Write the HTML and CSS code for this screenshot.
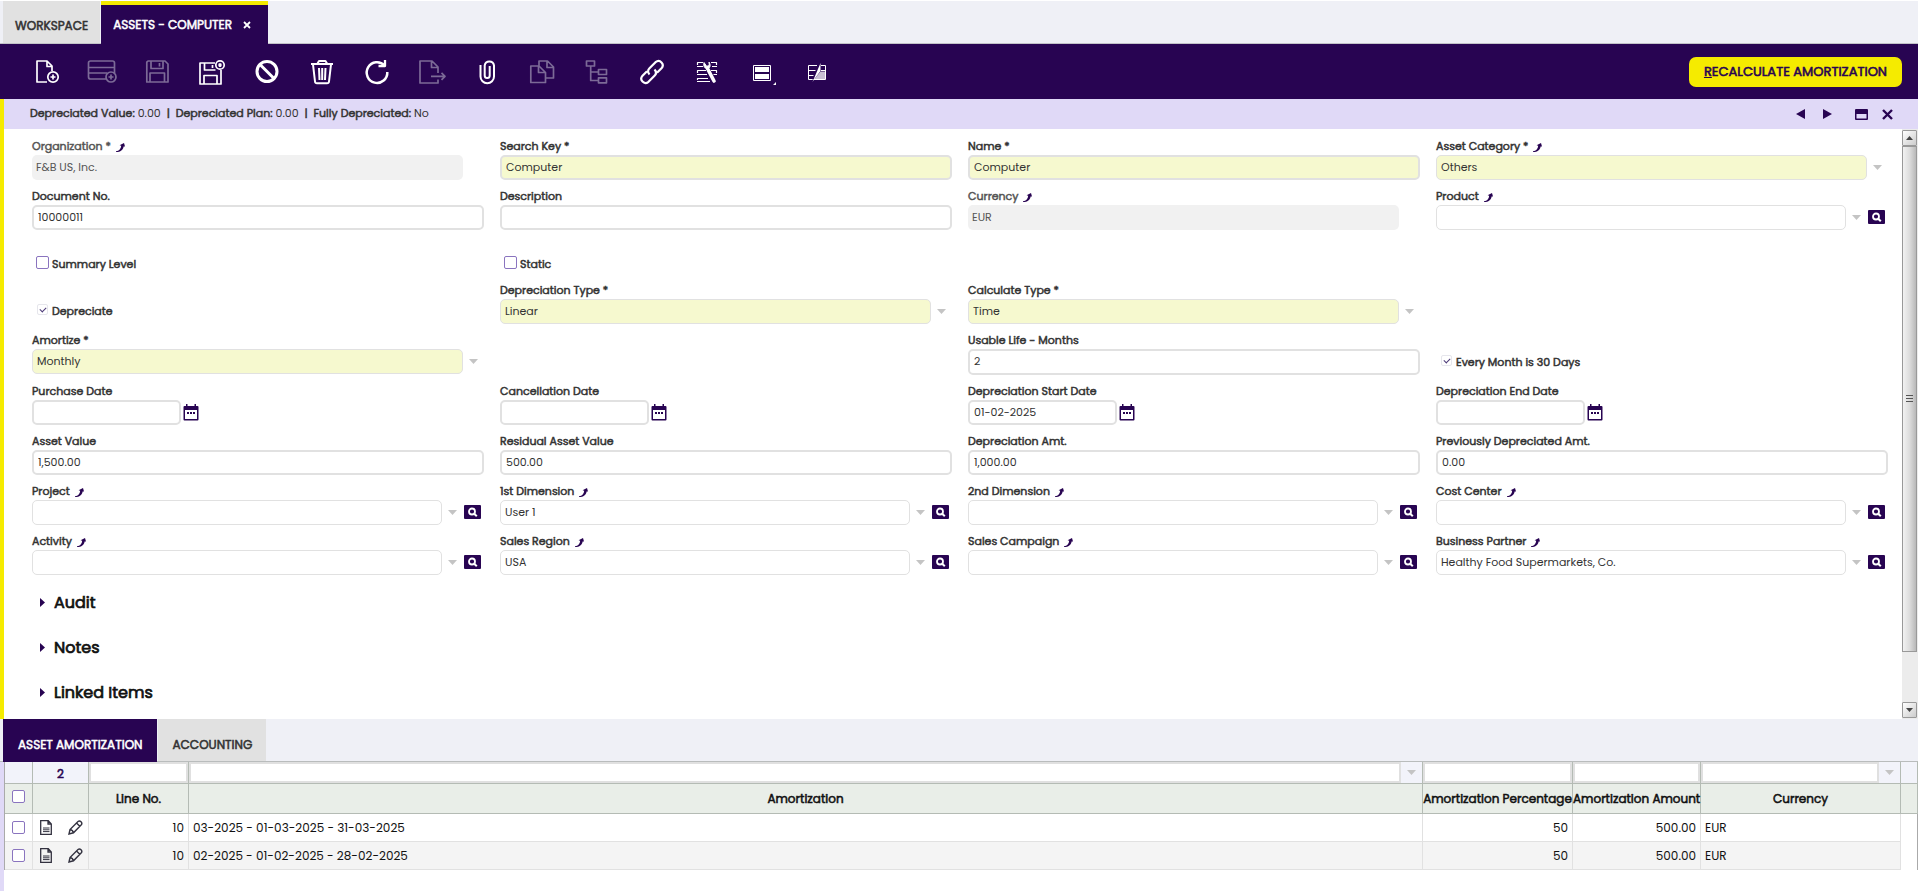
FILE: index.html
```html
<!DOCTYPE html>
<html lang="en">
<head>
<meta charset="utf-8">
<title>Assets - Computer</title>
<link rel="stylesheet" href="styles.css">
</head>
<body>
<svg class="defs" aria-hidden="true">
  <symbol id="jump" viewBox="0 0 9 9"><path d="M0 9C4.500 9 7.200 7 7.600 3.500L9 3.500 8 0 3.600 2.200 5.200 2.800C5 5.500 3.200 8 0 8.300z" fill="#280452"/></symbol>
  <symbol id="down" viewBox="0 0 9 5"><path d="M0 0h9L4.500 5z" fill="#c4c4c4"/></symbol>
  <symbol id="search" viewBox="0 0 17 14"><rect width="17" height="14" rx="1" fill="#280452"/><circle cx="8" cy="6.500" r="3" fill="none" stroke="#fff" stroke-width="1.800"/><path d="M10.200 8.700l2.600 2.600" stroke="#fff" stroke-width="2"/></symbol>
  <symbol id="cal" viewBox="0 0 16 17"><path d="M1.500 2h13a1 1 0 0 1 1 1v12.500a1 1 0 0 1-1 1h-13a1 1 0 0 1-1-1V3a1 1 0 0 1 1-1zM2 6v9h12V6z" fill="#280452" fill-rule="evenodd"/><path d="M3 0h1.500v3H3zM11.500 0H13v3h-1.500zM4 8h2v2H4zM7 8h2v2H7zM10 8h2v2h-2z" fill="#280452"/></symbol>
  <symbol id="doc" viewBox="0 0 12 15"><path d="M.7.7h7.600l3 3.200v10.400H.7zM8 1v3h3" fill="none" stroke="#333240" stroke-width="1.300"/><path d="M3 8h6.500M3 9.800h6.500M3 11.600h6.500" stroke="#333240" stroke-width="1"/></symbol>
  <symbol id="pencil" viewBox="0 0 15 15"><path d="M1 14l1-4.500L10 1.500q1.500-1.200 3 .3t.3 3L5.500 12.800zM8.500 3l3.300 3.300M2 9.800c2 0 3 1 3.200 3" fill="none" stroke="#333240" stroke-width="1.400"/></symbol>
</svg>

<nav class="tabs">
  <button class="tab">WORKSPACE</button>
  <div class="tab tab-active"><span>ASSETS - COMPUTER</span>
    <button class="plain" aria-label="Close tab"><svg width="8" height="8" viewBox="0 0 8 8"><path d="M1 1l6 6M7 1L1 7" stroke="#fff" stroke-width="1.800"/></svg></button>
  </div>
</nav>

<header class="toolbar">
  <button class="tool" aria-label="New"><svg viewBox="0 0 30 30"><path d="M15 25H5V4h10l5 5v5M15 4v5.500h5"/><circle cx="21" cy="20" r="5.200"/><path d="M21 17.500v5M18.500 20h5"/></svg></button>
  <button class="tool" disabled aria-label="New in grid"><svg viewBox="0 0 30 30"><path d="M19 22H3.500q-2 0-2-2V6q0-2 2-2h22q2 0 2 2v10M2 10.500h25M2 16h18"/><circle cx="24" cy="20" r="5"/><path d="M24 17.500v5M21.500 20h5"/></svg></button>
  <button class="tool" disabled aria-label="Save"><svg viewBox="0 0 30 30"><path d="M6 4h17l3 3v18H4.800V5.200zM9 4v7.500h12V4M17.500 6v3.500M8 25v-9h14.500v9"/></svg></button>
  <button class="tool" aria-label="Save and close"><svg viewBox="0 0 30 30"><path d="M18 6H3v21h21V13M7.500 6v7h11M15.500 8v3M7 27v-8.500h13V27"/><circle cx="23" cy="8" r="4.200"/><path d="M21.700 6.700l2.600 2.600M24.300 6.700l-2.600 2.600"/></svg></button>
  <button class="tool" aria-label="Undo"><svg viewBox="0 0 30 30" class="heavy"><circle cx="15" cy="14.500" r="10"/><path d="M8 7.500l14 14"/></svg></button>
  <button class="tool" aria-label="Delete"><svg viewBox="0 0 30 30"><path d="M4 7h22M6 7.500l2 17q.2 1.800 2 1.800h10q1.800 0 2-1.800l2-17M10.500 6.500L12 4h6.500L20 6.500M12 11l.5 12M15.200 11v12M18.500 11L18 23" stroke-width="2"/></svg></button>
  <button class="tool" aria-label="Refresh"><svg viewBox="0 0 30 30"><path d="M22.500 8.500A10.300 10.300 0 1 0 25.300 15" stroke-width="2.500"/><path d="M23 3v6h-6.500" stroke-width="2.300"/></svg></button>
  <button class="tool" disabled aria-label="Export"><svg viewBox="0 0 30 30"><path d="M21 16V10l-6-6H3v22h18v-3.500M14.500 4v6.500H21M14 19.300h13M24.500 15.800l3.500 3.500-3.500 3.500"/></svg></button>
  <button class="tool" aria-label="Attach"><svg viewBox="0 0 30 30"><path d="M8.500 8v11.500a6.500 6.500 0 0 0 13.500 0V8.500a4.700 4.700 0 0 0-9.300 0V18.500a2.500 2.500 0 0 0 5 0V9" stroke-width="2"/></svg></button>
  <button class="tool" disabled aria-label="Copy"><svg viewBox="0 0 30 30"><path d="M18.500 21H26.500V10l-6-6H12v5M20 4v6.500h6.500M12 9H3.800v16.500h14.700V15.500zM11.500 9v6.500h7"/></svg></button>
  <button class="tool" disabled aria-label="Tree"><svg viewBox="0 0 30 30"><path d="M4.500 4h8v5h-8zM16.500 12.500h8v5h-8zM16.500 20.800h8v5h-8zM8.700 9v14.500h8M8.700 15h8"/></svg></button>
  <button class="tool" aria-label="Link"><svg viewBox="0 0 30 30"><path d="M12.500 17.500c-2-2-1.800-4.500 0-6.300l6-6c4.500-3.500 9.500 2 6 6l-4.500 4.500M17.500 12.500c2 2 1.800 4.500 0 6.300l-6 6c-4.500 3.500-9.500-2-6-6l4.500-4.500" stroke-width="2.200"/></svg></button>
  <button class="tool" aria-label="Customize form"><svg viewBox="0 0 30 30"><path d="M5.500 8V5.500H11M19 5.500h5.500V8M5 9.500h6M20 9.500h5M5.500 16v-2.500H14M19 13.500h5.500V16M5 17.500h10M21.500 17.500H25M5.500 23v-1.500H16M5 24.500h13" stroke-width="1.200"/><path d="M15.500 11.500l6.500 12.500" stroke-width="3.600" stroke-linecap="round"/><path d="M12 5.500c-.8 3 .2 5.500 3 6.500 3-.5 4.200-3.500 2-7l.3 3.500-2.600.8z" fill="currentColor" stroke-width="1"/></svg></button>
  <button class="tool" aria-label="View"><svg viewBox="0 0 30 30"><path d="M6.500 8.500h17v15h-17z" stroke-width="1"/><path d="M8 10h14v5H8zM8 17h14v5H8zM29 25v3h-3z" fill="currentColor" stroke="none"/></svg></button>
  <button class="tool" aria-label="Personalize"><svg viewBox="0 0 30 30"><path d="M15 8.500H6.500v14h4.200M19 8.500h4.500v14h-12M6.500 13.500h7M6.500 18.500h5M19 13.500h4.500" stroke-width="1"/><path d="M18.500 6v8L12.500 22 10.500 25z" fill="currentColor" stroke="none"/><path d="M18.500 14.500H23V22h-10.500z" fill="currentColor" stroke="none" opacity=".75"/></svg></button>
  <button class="action"><u>R</u>ECALCULATE AMORTIZATION</button>
</header>

<main class="record">
  <div class="status">
    <p class="status-text"><b>Depreciated Value:</b> 0.00 &nbsp;<b>|</b>&nbsp; <b>Depreciated Plan:</b> 0.00 &nbsp;<b>|</b>&nbsp; <b>Fully Depreciated:</b> No</p>
    <div class="status-nav">
      <button class="plain" aria-label="Previous"><svg width="9" height="10" viewBox="0 0 9 10"><path d="M9 0v10L0 5z" fill="#280452"/></svg></button>
      <button class="plain" aria-label="Next"><svg width="9" height="10" viewBox="0 0 9 10"><path d="M0 0v10l9-5z" fill="#280452"/></svg></button>
      <button class="plain nav-max" aria-label="Maximize"><svg width="13" height="11" viewBox="0 0 13 11"><path d="M1 0h11a1 1 0 0 1 1 1v9a1 1 0 0 1-1 1H1a1 1 0 0 1-1-1V1a1 1 0 0 1 1-1zM1.500 5v4.500h10V5z" fill="#280452" fill-rule="evenodd"/></svg></button>
      <button class="plain" aria-label="Close"><svg width="11" height="11" viewBox="0 0 11 11"><path d="M1 1l9 9M10 1l-9 9" stroke="#280452" stroke-width="2.400"/></svg></button>
    </div>
  </div>

  <div class="scroll-area">
    <form class="form">
      <div class="fields">
        <div class="field muted"><label for="org">Organization * <svg class="jump"><use href="#jump"/></svg></label><div class="combo"><input id="org" value="F&amp;B US, Inc." disabled><span class="arrow"></span></div></div>
        <div class="field"><label for="key">Search Key *</label><input id="key" class="required" value="Computer"></div>
        <div class="field"><label for="name">Name *</label><input id="name" class="required" value="Computer"></div>
        <div class="field"><label for="cat">Asset Category * <svg class="jump"><use href="#jump"/></svg></label><div class="combo"><select id="cat" class="required"><option>Others</option></select><span class="arrow"><svg><use href="#down"/></svg></span></div></div>

        <div class="field"><label for="docno">Document No.</label><input id="docno" value="10000011"></div>
        <div class="field"><label for="desc">Description</label><input id="desc"></div>
        <div class="field muted"><label for="cur">Currency <svg class="jump"><use href="#jump"/></svg></label><div class="combo"><input id="cur" value="EUR" disabled><span class="arrow"></span></div></div>
        <div class="field"><label for="prod">Product <svg class="jump"><use href="#jump"/></svg></label><div class="combo combo-lookup"><select id="prod"><option></option></select><span class="arrow"><svg><use href="#down"/></svg></span><button type="button" class="lookup" aria-label="Search product"><svg><use href="#search"/></svg></button></div></div>

        <div class="check check-short col-1"><input type="checkbox" id="sum"><label for="sum">Summary Level</label></div>
        <div class="check check-short"><input type="checkbox" id="static"><label for="static">Static</label></div>

        <div class="check col-1"><input type="checkbox" id="depr" checked disabled><label for="depr">Depreciate</label></div>
        <div class="field"><label for="dtype">Depreciation Type *</label><div class="combo"><select id="dtype" class="required"><option>Linear</option></select><span class="arrow"><svg><use href="#down"/></svg></span></div></div>
        <div class="field"><label for="ctype">Calculate Type *</label><div class="combo"><select id="ctype" class="required"><option>Time</option></select><span class="arrow"><svg><use href="#down"/></svg></span></div></div>

        <div class="field col-1"><label for="amort">Amortize *</label><div class="combo"><select id="amort" class="required"><option>Monthly</option></select><span class="arrow"><svg><use href="#down"/></svg></span></div></div>
        <div class="field col-3"><label for="life">Usable Life - Months</label><input id="life" class="number" value="2"></div>
        <div class="check"><input type="checkbox" id="m30" checked disabled><label for="m30">Every Month is 30 Days</label></div>

        <div class="field"><label for="pdate">Purchase Date</label><div class="date"><input id="pdate"><button type="button" class="plain" aria-label="Pick purchase date"><svg><use href="#cal"/></svg></button></div></div>
        <div class="field"><label for="cdate">Cancellation Date</label><div class="date"><input id="cdate"><button type="button" class="plain" aria-label="Pick cancellation date"><svg><use href="#cal"/></svg></button></div></div>
        <div class="field"><label for="sdate">Depreciation Start Date</label><div class="date"><input id="sdate" value="01-02-2025"><button type="button" class="plain" aria-label="Pick start date"><svg><use href="#cal"/></svg></button></div></div>
        <div class="field"><label for="edate">Depreciation End Date</label><div class="date"><input id="edate"><button type="button" class="plain" aria-label="Pick end date"><svg><use href="#cal"/></svg></button></div></div>

        <div class="field"><label for="aval">Asset Value</label><input id="aval" value="1,500.00"></div>
        <div class="field"><label for="rval">Residual Asset Value</label><input id="rval" value="500.00"></div>
        <div class="field"><label for="damt">Depreciation Amt.</label><input id="damt" value="1,000.00"></div>
        <div class="field"><label for="pamt">Previously Depreciated Amt.</label><input id="pamt" value="0.00"></div>

        <div class="field"><label for="proj">Project <svg class="jump"><use href="#jump"/></svg></label><div class="combo combo-lookup"><select id="proj"><option></option></select><span class="arrow"><svg><use href="#down"/></svg></span><button type="button" class="lookup" aria-label="Search project"><svg><use href="#search"/></svg></button></div></div>
        <div class="field"><label for="dim1">1st Dimension <svg class="jump"><use href="#jump"/></svg></label><div class="combo combo-lookup"><select id="dim1"><option>User 1</option></select><span class="arrow"><svg><use href="#down"/></svg></span><button type="button" class="lookup" aria-label="Search 1st dimension"><svg><use href="#search"/></svg></button></div></div>
        <div class="field"><label for="dim2">2nd Dimension <svg class="jump"><use href="#jump"/></svg></label><div class="combo combo-lookup"><select id="dim2"><option></option></select><span class="arrow"><svg><use href="#down"/></svg></span><button type="button" class="lookup" aria-label="Search 2nd dimension"><svg><use href="#search"/></svg></button></div></div>
        <div class="field"><label for="cost">Cost Center <svg class="jump"><use href="#jump"/></svg></label><div class="combo combo-lookup"><select id="cost"><option></option></select><span class="arrow"><svg><use href="#down"/></svg></span><button type="button" class="lookup" aria-label="Search cost center"><svg><use href="#search"/></svg></button></div></div>

        <div class="field"><label for="act">Activity <svg class="jump"><use href="#jump"/></svg></label><div class="combo combo-lookup"><select id="act"><option></option></select><span class="arrow"><svg><use href="#down"/></svg></span><button type="button" class="lookup" aria-label="Search activity"><svg><use href="#search"/></svg></button></div></div>
        <div class="field"><label for="reg">Sales Region <svg class="jump"><use href="#jump"/></svg></label><div class="combo combo-lookup"><select id="reg"><option>USA</option></select><span class="arrow"><svg><use href="#down"/></svg></span><button type="button" class="lookup" aria-label="Search sales region"><svg><use href="#search"/></svg></button></div></div>
        <div class="field"><label for="camp">Sales Campaign <svg class="jump"><use href="#jump"/></svg></label><div class="combo combo-lookup"><select id="camp"><option></option></select><span class="arrow"><svg><use href="#down"/></svg></span><button type="button" class="lookup" aria-label="Search sales campaign"><svg><use href="#search"/></svg></button></div></div>
        <div class="field"><label for="bp">Business Partner <svg class="jump"><use href="#jump"/></svg></label><div class="combo combo-lookup"><select id="bp"><option>Healthy Food Supermarkets, Co.</option></select><span class="arrow"><svg><use href="#down"/></svg></span><button type="button" class="lookup" aria-label="Search business partner"><svg><use href="#search"/></svg></button></div></div>
      </div>
      <div class="sections">
        <button type="button" class="section"><svg viewBox="0 0 5 9"><path d="M0 0v9l5-4.500z" fill="#280452"/></svg>Audit</button>
        <button type="button" class="section"><svg viewBox="0 0 5 9"><path d="M0 0v9l5-4.500z" fill="#280452"/></svg>Notes</button>
        <button type="button" class="section"><svg viewBox="0 0 5 9"><path d="M0 0v9l5-4.500z" fill="#280452"/></svg>Linked Items</button>
      </div>
    </form>
    <div class="scrollbar">
      <button class="sb-btn" aria-label="Scroll up"><svg viewBox="0 0 7 4"><path d="M0 4h7L3.500 0z" fill="#444"/></svg></button>
      <div class="sb-thumb"><i></i><i></i><i></i></div>
      <div class="sb-track"></div>
      <button class="sb-btn" aria-label="Scroll down"><svg viewBox="0 0 7 4"><path d="M0 0h7L3.500 4z" fill="#444"/></svg></button>
    </div>
  </div>
</main>

<nav class="subtabs">
  <button class="subtab subtab-active">ASSET AMORTIZATION</button>
  <button class="subtab">ACCOUNTING</button>
</nav>

<section class="grid">
  <table class="lines">
    <colgroup><col class="c-check"><col class="c-tools"><col class="c-line"><col><col class="c-pct"><col class="c-amt"><col class="c-cur"><col class="c-end"></colgroup>
    <thead>
      <tr class="filters">
        <td></td><td class="count">2</td>
        <td><input aria-label="Filter line no."></td>
        <td><div class="filter-combo"><input aria-label="Filter amortization"><svg><use href="#down"/></svg></div></td>
        <td><input aria-label="Filter percentage"></td>
        <td><input aria-label="Filter amount"></td>
        <td><div class="filter-combo"><input aria-label="Filter currency"><svg><use href="#down"/></svg></div></td>
        <td></td>
      </tr>
      <tr class="heads">
        <th><input type="checkbox" aria-label="Select all"></th><th></th><th>Line No.</th><th>Amortization</th><th>Amortization Percentage</th><th>Amortization Amount</th><th>Currency</th><th></th>
      </tr>
    </thead>
    <tbody>
      <tr>
        <td class="pick"><input type="checkbox" aria-label="Select row 1"></td>
        <td><div class="row-tools"><button class="plain" aria-label="Open row 1"><svg class="i-doc"><use href="#doc"/></svg></button><button class="plain" aria-label="Edit row 1"><svg class="i-pen"><use href="#pencil"/></svg></button></div></td>
        <td class="num">10</td><td>03-2025 - 01-03-2025 - 31-03-2025</td><td class="num">50</td><td class="num">500.00</td><td>EUR</td><td class="end"></td>
      </tr>
      <tr class="alt">
        <td class="pick"><input type="checkbox" aria-label="Select row 2"></td>
        <td><div class="row-tools"><button class="plain" aria-label="Open row 2"><svg class="i-doc"><use href="#doc"/></svg></button><button class="plain" aria-label="Edit row 2"><svg class="i-pen"><use href="#pencil"/></svg></button></div></td>
        <td class="num">10</td><td>02-2025 - 01-02-2025 - 28-02-2025</td><td class="num">50</td><td class="num">500.00</td><td>EUR</td><td class="end"></td>
      </tr>
    </tbody>
  </table>
</section>
</body>
</html>
```
FILE: styles.css
```css
:root {
  --ink: #280452;
  --yellow: #f5eb00;
  --lilac: #e0d9f7;
  --bar: #eff0f6;
  --line: #e1e1e1;
  --required: #f6f9cf;
}
* { box-sizing: border-box; }
body {
  margin: 0;
  min-height: 100vh;
  display: flex;
  flex-direction: column;
  background: #fff;
  color: #333;
  font: 11px/18px Poppins, Inter, "Open Sans", sans-serif;
}
button, input, select { font: inherit; color: inherit; }
button { border: 0; padding: 0; background: none; cursor: pointer; }
.defs { position: absolute; width: 0; height: 0; }
.plain { display: flex; align-items: center; }

/* emphasis keeps the regular face and thickens its outline */
.tab, .subtab, .action, .status-text b, .field > label, .check label,
.section, .filters .count, .heads th {
  font-weight: 400;
  -webkit-text-stroke: 0.045em currentColor;
}

/* window tabs */
.tabs {
  display: flex;
  gap: 1px;
  height: 44px;
  padding-left: 3px;
  border-top: 1px solid #fff;
  border-bottom: 1px solid #c2c2c8;
  background: var(--bar);
}
.tab {
  display: flex;
  align-items: center;
  padding: 8px 12px 0;
  background: var(--line);
  font-size: 12px;
}
.tab-active {
  gap: 11px;
  margin-bottom: -1px;
  padding: 0 17px 0 12px;
  border-top: 4px solid var(--yellow);
  background: var(--ink);
  color: #fff;
}

/* toolbar */
.toolbar {
  display: flex;
  align-items: center;
  height: 55px;
  padding: 0 16px 0 19px;
  background: var(--ink);
}
.tool { width: 55px; display: flex; justify-content: center; color: #fff; }
.tool:disabled { color: #7c6a97; }
.tool svg {
  width: 30px;
  height: 30px;
  fill: none;
  stroke: currentColor;
  stroke-width: 1.7;
  stroke-linejoin: round;
}
.tool .heavy { stroke-width: 3; }
.action {
  margin-left: auto;
  height: 30px;
  padding: 0 15px;
  border-radius: 7px;
  background: var(--yellow);
  color: var(--ink);
  font-size: 13px;
}

/* status bar */
.record { border-left: 4px solid var(--yellow); }
.status {
  display: flex;
  justify-content: space-between;
  align-items: center;
  height: 30px;
  padding: 0 25px 0 26px;
  background: var(--lilac);
}
.status-text { margin: 0; padding-bottom: 2px; }
.status-nav { display: flex; align-items: center; gap: 18px; }
.nav-max { margin: 0 -4px 0 5px; }

/* form */
.scroll-area { display: flex; }
.form { flex: 1; min-width: 0; padding: 1px 14px 4px 28px; }
.fields {
  display: grid;
  grid-template-columns: repeat(4, minmax(0, 1fr));
  column-gap: 16px;
  align-items: start;
}
.col-1 { grid-column-start: 1; }
.col-3 { grid-column-start: 3; }
.field { display: flex; flex-direction: column; }
.field > label {
  display: flex;
  align-items: center;
  gap: 5px;
  padding-top: 7px;
}
.muted { color: #555; }
.jump { width: 9px; height: 9px; margin-top: 3px; }
.field input, .field select {
  width: 100%;
  min-width: 0;
  height: 25px;
  padding: 0 4px;
  border: 2px solid var(--line);
  border-radius: 5px;
  background: #fff;
}
.field select { flex: 1; appearance: none; padding-bottom: 2px; border-width: 1px; }
.field input:disabled { flex: 1; border: 0; background: #f1f1f1; color: #555; }
.field input.required, .field select.required { background: var(--required); }
.field input.number { height: 26px; padding-bottom: 1px; }
.combo { display: flex; align-items: center; }
.arrow { width: 21px; display: flex; justify-content: center; }
.arrow svg { width: 9px; height: 5px; }
.combo-lookup .arrow { width: 20px; }
.lookup { width: 22px; display: flex; justify-content: flex-start; padding: 0 0 1px 2px; }
.lookup svg { width: 17px; height: 14px; }
.date { display: flex; align-items: center; gap: 2px; }
.date input { width: 149px; }
.date svg { width: 16px; height: 17px; }
.check {
  display: flex;
  align-items: center;
  align-self: end;
  gap: 3px;
  height: 20px;
  margin-bottom: 3px;
  padding-left: 4px;
}
.check-short { height: 44px; margin: 0; padding-top: 24px; }
input[type="checkbox"] {
  appearance: none;
  flex: none;
  width: 13px;
  height: 13px;
  margin: 0 0 3px;
  border: 1px solid #8a74bf;
  border-radius: 2px;
  background: #fff;
}
input[type="checkbox"]:disabled {
  width: 11px;
  height: 11px;
  margin: 0 1px 3px;
  border-color: #e6e6ec;
}
input[type="checkbox"]:checked::after {
  content: "";
  display: block;
  width: 5px;
  height: 3px;
  margin: 2px;
  border: solid #4c3a78;
  border-width: 0 0 1px 1px;
  transform: rotate(-45deg);
}
.sections { margin-top: 5px; }
.section {
  display: flex;
  align-items: center;
  gap: 9px;
  height: 45px;
  padding-left: 8px;
  color: #111;
  font-size: 16px;
}
.section svg { width: 5px; height: 9px; }

/* scrollbar */
.scrollbar {
  display: flex;
  flex-direction: column;
  width: 16px;
  padding: 1px 1px 1px 0;
  background: #ececec;
}
.sb-btn {
  display: flex;
  align-items: center;
  justify-content: center;
  height: 16px;
  border: 1px solid #999;
  border-radius: 1px;
  background: linear-gradient(135deg, #fff, #ccc);
}
.sb-btn svg { width: 7px; height: 4px; }
.sb-thumb {
  flex: 10;
  display: flex;
  flex-direction: column;
  align-items: center;
  justify-content: center;
  gap: 2px;
  border: 1px solid #999;
  background: linear-gradient(90deg, #f2f2f2, #ddd 50%, #b8b8b8);
}
.sb-thumb i { width: 7px; height: 1px; background: #555; }
.sb-track { flex: 1; }

/* child tabs */
.subtabs {
  display: flex;
  gap: 1px;
  height: 43px;
  padding-left: 3px;
  border-bottom: 1px solid #b9bcbc;
  background: var(--bar);
}
.subtab {
  padding: 9px 14px 0 15px;
  background: var(--line);
  font-size: 12px;
}
.subtab-active { margin-bottom: -1px; background: var(--ink); color: #fff; }

/* lines grid */
.grid {
  flex: 1;
  padding-left: 4px;
  background: linear-gradient(90deg, var(--lilac) 4px, #fff 4px);
}
.lines {
  width: 100%;
  table-layout: fixed;
  border-collapse: separate;
  border-spacing: 0;
  border-left: 1px solid #aaa;
  color: #111;
  font-size: 12px;
}
.c-check { width: 28px; }
.c-tools { width: 56px; }
.c-line { width: 100px; }
.c-pct { width: 150px; }
.c-amt { width: 128px; }
.c-cur { width: 200px; }
.c-end { width: 17px; }
.lines td, .lines th { padding: 0; border: solid #b4bbb4; border-width: 0 1px 1px 0; }
.filters td { height: 22px; background: #f2f3fa; }
.filters .count { padding-top: 2px; text-align: center; color: var(--ink); }
.filters input {
  display: block;
  width: 100%;
  min-width: 0;
  height: 21px;
  border: 2px solid #e0e0e0;
  background: #fff;
}
.filter-combo { display: flex; align-items: center; }
.filter-combo input { flex: 1; }
.filter-combo svg { flex: none; width: 9px; height: 5px; margin: 0 6px; }
.heads th { height: 30px; background: #e9eee8; white-space: nowrap; text-align: center; }
.heads input { display: block; margin: 0 7px 4px; }
.pick input { display: block; margin: 0 7px 1px; }
.lines tbody td { height: 28px; padding: 0 4px; border-color: var(--line); }
.lines tbody .pick, .lines tbody td:nth-child(2) { padding: 0; }
.lines .num { text-align: right; }
.alt td { background: #f4f4f4; }
.lines tbody .end { background: #fff; border-width: 0 1px 0 0; border-color: #aaa; }
.row-tools { display: flex; align-items: center; gap: 16px; padding-left: 7px; }
.i-doc { width: 12px; height: 15px; }
.i-pen { width: 15px; height: 15px; }
```
